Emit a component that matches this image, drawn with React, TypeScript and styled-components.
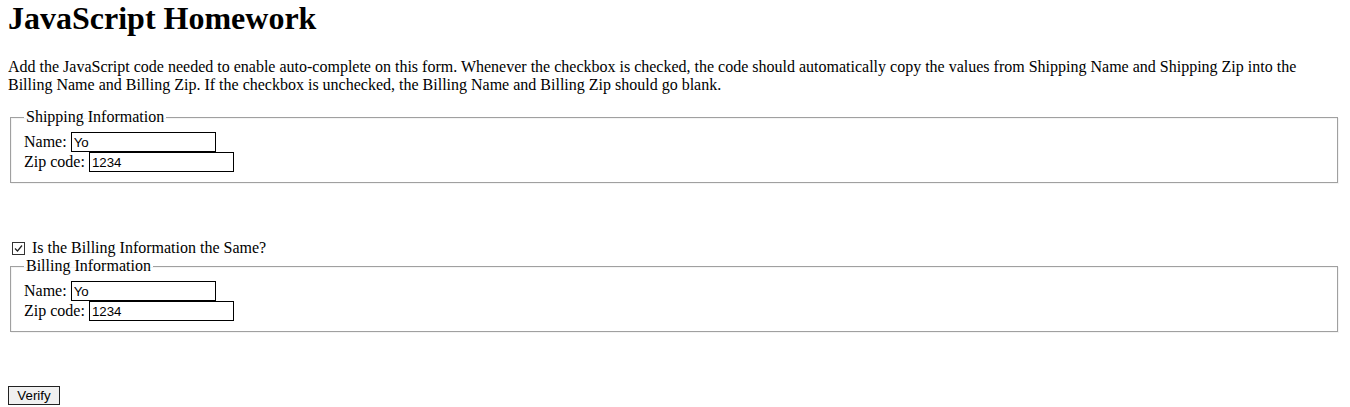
import React, { useState } from "react";
import styled, { createGlobalStyle } from "styled-components";

const Global = createGlobalStyle`
  html, body { background: #fff; }
  body {
    margin: 0 8px 8px 8px;
    font-family: "Liberation Serif", "Times New Roman", serif;
    font-size: 16px;
    color: #000;
  }
`;

const Title = styled.h1`
  font-size: 32px;
  font-weight: bold;
  margin: 0 0 21.44px 0;
  line-height: normal;
`;

const Intro = styled.p`
  margin: 16px 0 14px 0;
  line-height: normal;
`;

const Fieldset = styled.fieldset`
  margin: 0 4px 0 2px;
  padding: 5.6px 13px 10px 13px;
  border: 1px solid #a0a0a0;
  box-shadow: 1px 1px 0 #f4f4f4, inset 1px 1px 0 #f4f4f4;
`;

const Legend = styled.legend`
  padding: 0 2px;
  line-height: normal;
`;

const Row = styled.div`
  display: flex;
  align-items: center;
  height: 20px;
`;

const Label = styled.label`
  margin-right: 4px;
  white-space: pre;
`;

const TextInput = styled.input`
  box-sizing: border-box;
  width: 145px;
  height: 20px;
  border: 1px solid #000;
  padding: 1px 2px;
  margin: 0;
  font-family: "Liberation Sans", Arial, sans-serif;
  font-size: 13.3px;
  color: #000;
  outline: none;
  background: #fff;
`;

const CheckRow = styled.label`
  display: flex;
  align-items: center;
  height: 18.4px;
  margin-top: 56px;
  cursor: default;
`;

const Box = styled.span`
  box-sizing: border-box;
  width: 13px;
  height: 13px;
  margin: 0 7px 0 4px;
  border: 1px solid #333;
  background: #fff;
  display: inline-flex;
  align-items: center;
  justify-content: center;
`;

const HiddenCheck = styled.input`
  display: none;
`;

const ButtonRow = styled.div`
  display: flex;
  margin-top: 54px;
`;

const Button = styled.button`
  box-sizing: border-box;
  height: 19px;
  width: 52px;
  padding: 0 6px;
  border: 1px solid #222;
  background: #f0f0f0;
  font-family: "Liberation Sans", Arial, sans-serif;
  font-size: 13.3px;
  color: #000;
  line-height: 16px;
  margin: 0;
  border-radius: 0;
`;

export default function App() {
  const [shipName, setShipName] = useState("Yo");
  const [shipZip, setShipZip] = useState("1234");
  const [same, setSame] = useState(true);
  const [billName, setBillName] = useState("Yo");
  const [billZip, setBillZip] = useState("1234");

  const toggle = () => {
    const next = !same;
    setSame(next);
    if (next) {
      setBillName(shipName);
      setBillZip(shipZip);
    } else {
      setBillName("");
      setBillZip("");
    }
  };

  return (
    <>
      <Global />
      <Title>JavaScript Homework</Title>
      <Intro>
        Add the JavaScript code needed to enable auto-complete on this form. Whenever the checkbox is checked, the
        code should automatically copy the values from Shipping Name and Shipping Zip into the Billing Name and
        Billing Zip. If the checkbox is unchecked, the Billing Name and Billing Zip should go blank.
      </Intro>
      <Fieldset>
        <Legend>Shipping Information</Legend>
        <Row>
          <Label htmlFor="shippingName">Name:</Label>
          <TextInput id="shippingName" value={shipName} onChange={(e) => setShipName(e.target.value)} />
        </Row>
        <Row>
          <Label htmlFor="shippingZip">Zip code:</Label>
          <TextInput id="shippingZip" value={shipZip} onChange={(e) => setShipZip(e.target.value)} />
        </Row>
      </Fieldset>
      <CheckRow>
        <HiddenCheck type="checkbox" checked={same} onChange={toggle} />
        <Box>
          {same && (
            <svg width="9" height="9" viewBox="0 0 9 9">
              <path d="M1 4.5 L3.5 7 L8 1.5" fill="none" stroke="#222" strokeWidth="1.2" />
            </svg>
          )}
        </Box>
        Is the Billing Information the Same?
      </CheckRow>
      <Fieldset>
        <Legend>Billing Information</Legend>
        <Row>
          <Label htmlFor="billingName">Name:</Label>
          <TextInput id="billingName" value={billName} onChange={(e) => setBillName(e.target.value)} />
        </Row>
        <Row>
          <Label htmlFor="billingZip">Zip code:</Label>
          <TextInput id="billingZip" value={billZip} onChange={(e) => setBillZip(e.target.value)} />
        </Row>
      </Fieldset>
      <ButtonRow>
        <Button type="button">Verify</Button>
      </ButtonRow>
    </>
  );
}
